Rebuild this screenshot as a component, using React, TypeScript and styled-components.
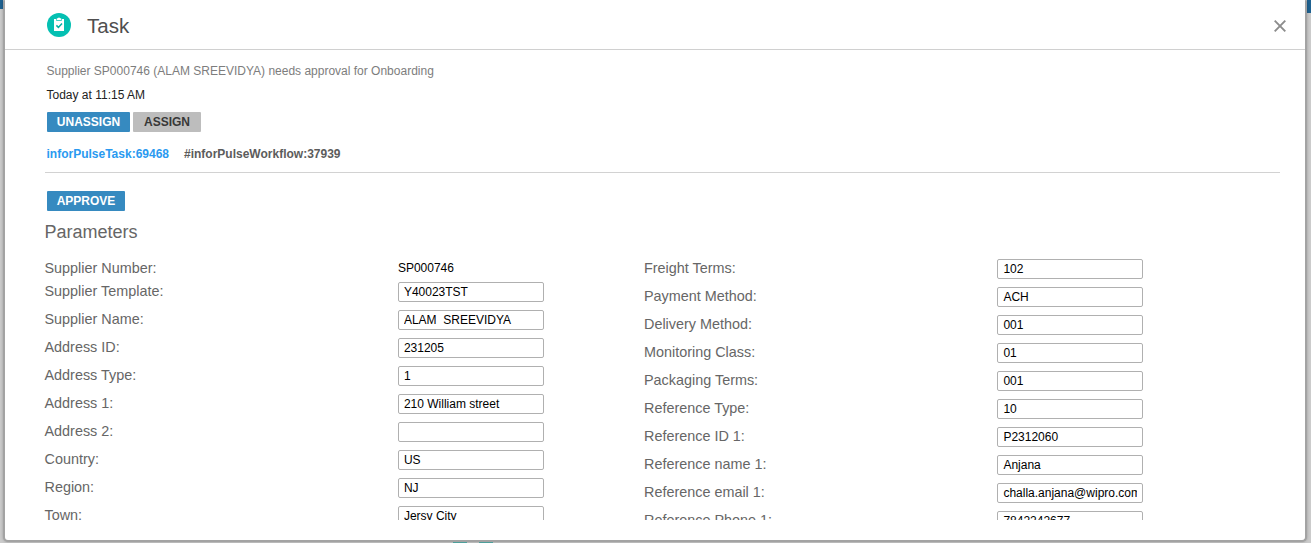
import React from 'react';
import styled, { createGlobalStyle } from 'styled-components';

const GlobalStyle = createGlobalStyle`
  * { box-sizing: border-box; }
  body {
    margin: 0;
    overflow: hidden;
    font-family: Arial, 'Liberation Sans', sans-serif;
    background: #cbcbcb;
  }
`;

const Page = styled.div`
  position: relative;
  display: flex;
  height: 543px;
  padding: 0 4px 1px 3px;
  overflow: hidden;
`;

const Banner = styled.div<{ $side: 'left' | 'right' }>`
  position: absolute;
  top: 0;
  ${(p) => p.$side}: 0;
  width: ${(p) => (p.$side === 'left' ? 3 : 4)}px;
  height: ${(p) => (p.$side === 'left' ? 9 : 13)}px;
  background: #1f6291;
`;

const Behind = styled.div`
  position: absolute;
  left: 453px;
  bottom: 0;
  display: flex;
  gap: 12px;
`;

const Dash = styled.span`
  width: 14px;
  height: 1px;
  background: #4d9f9b;
`;

const Dialog = styled.section`
  flex: 1;
  display: flex;
  flex-direction: column;
  border: 2px solid #a3a3a3;
  border-top: 0;
  border-radius: 2px 2px 5px 5px;
  background: #fff;
  box-shadow: 0 0 3px rgba(0, 0, 0, 0.25);
  position: relative;
`;

const Header = styled.header`
  display: flex;
  align-items: center;
  height: 50px;
  padding: 0 19px 0 42px;
  border-bottom: 1px solid #d0d0d0;
`;

const Title = styled.h1`
  flex: 1;
  margin: 2px 0 0 16px;
  font-size: 20.5px;
  line-height: 26px;
  font-weight: 400;
  color: #4f4f4f;
`;

const Close = styled.button`
  display: flex;
  margin-top: 3px;
  padding: 0;
  border: 0;
  background: none;
`;

const Body = styled.main`
  height: 470px;
  padding: 13px 25px 0 39.5px;
  overflow: hidden;
`;

const Details = styled.div`
  height: 109px;
  padding-left: 2px;
  font-size: 12px;
`;

const Message = styled.p`
  margin: 0;
  line-height: 16px;
  color: #7d7d7d;
`;

const Time = styled.p`
  margin: 8px 0 9px;
  line-height: 16px;
  color: #222;
`;

const Actions = styled.div`
  display: flex;
  gap: 3px;
  padding-left: 0.5px;
`;

const Button = styled.button<{ $width: number; $muted?: boolean }>`
  width: ${(p) => p.$width}px;
  height: 20px;
  padding: 0;
  border: 0;
  border-radius: 1px;
  background: ${(p) => (p.$muted ? '#bdbdbd' : '#368ac0')};
  color: ${(p) => (p.$muted ? '#383838' : '#fff')};
  font: bold 12px/20px Arial, 'Liberation Sans', sans-serif;
`;

const Tags = styled.div`
  display: flex;
  gap: 15px;
  margin-top: 14px;
  line-height: 16px;
  font-weight: 700;
`;

const Tag = styled.span<{ $link?: boolean }>`
  color: ${(p) => (p.$link ? '#2a9af0' : '#5c5c5c')};
`;

const Approval = styled.div`
  margin-left: 0.5px;
  padding: 18px 0 0 2px;
  border-top: 1px solid #d2d2d2;
`;

const Heading = styled.h2`
  margin: 10px 0 15px;
  font-size: 18px;
  line-height: 22px;
  font-weight: 400;
  color: #666;
`;

const Columns = styled.div`
  display: grid;
  grid-template-columns: 599.5px 600px;
`;

const Row = styled.div<{ $plain?: boolean }>`
  display: grid;
  grid-template-columns: 353.4px 146px;
  height: ${(p) => (p.$plain ? 23 : 28)}px;
`;

const Label = styled.label`
  font-size: 14.4px;
  line-height: 20px;
  color: #666;
`;

const Value = styled.span`
  font-size: 12px;
  line-height: 20px;
  color: #000;
`;

const Field = styled.div`
  height: 20px;
  margin-top: 1px;
  padding: 0 5px;
  border: 1px solid #b0b0b0;
  border-radius: 2px;
  font-size: 12px;
  line-height: 18px;
  color: #000;
`;

const FieldText = styled.div`
  overflow: hidden;
  white-space: pre;
`;

type Entry = { label: string; value: string; plain?: boolean };

const left: Entry[] = [
  { label: 'Supplier Number:', value: 'SP000746', plain: true },
  { label: 'Supplier Template:', value: 'Y40023TST' },
  { label: 'Supplier Name:', value: 'ALAM  SREEVIDYA' },
  { label: 'Address ID:', value: '231205' },
  { label: 'Address Type:', value: '1' },
  { label: 'Address 1:', value: '210 William street' },
  { label: 'Address 2:', value: '' },
  { label: 'Country:', value: 'US' },
  { label: 'Region:', value: 'NJ' },
  { label: 'Town:', value: 'Jersy City' },
];

const right: Entry[] = [
  { label: 'Freight Terms:', value: '102' },
  { label: 'Payment Method:', value: 'ACH' },
  { label: 'Delivery Method:', value: '001' },
  { label: 'Monitoring Class:', value: '01' },
  { label: 'Packaging Terms:', value: '001' },
  { label: 'Reference Type:', value: '10' },
  { label: 'Reference ID 1:', value: 'P2312060' },
  { label: 'Reference name 1:', value: 'Anjana' },
  { label: 'Reference email 1:', value: 'challa.anjana@wipro.com' },
  { label: 'Reference Phone 1:', value: '7842242677' },
];

const Parameters = ({ entries }: { entries: Entry[] }) => (
  <div>
    {entries.map((e) => (
      <Row key={e.label} $plain={e.plain}>
        <Label>{e.label}</Label>
        {e.plain ? (
          <Value>{e.value}</Value>
        ) : (
          <Field>
            <FieldText>{e.value}</FieldText>
          </Field>
        )}
      </Row>
    ))}
  </div>
);

const TaskIcon = () => (
  <svg width="24" height="24" viewBox="0 0 24 24">
    <circle cx="12" cy="12" r="12" fill="#04c0b2" />
    <path d="M7 6h2.2v1.7h5.600V6H17v12H7z" fill="#fff" />
    <path d="M9.800 6.900V5.300h1.100a1.150 1.150 0 0 1 2.200 0h1.100v1.600z" fill="#fff" />
    <path d="M9.400 12.400l2 2 3.600-4" fill="none" stroke="#04b0a3" strokeWidth="1.500" />
  </svg>
);

export default function App() {
  return (
    <>
      <GlobalStyle />
      <Page>
        <Banner $side="left" />
        <Banner $side="right" />
        <Dialog>
          <Header>
            <TaskIcon />
            <Title>Task</Title>
            <Close aria-label="Close">
              <svg width="12" height="12" viewBox="0 0 12 12">
                <path d="M0.700 0.700l10.600 10.600M11.300 0.700L0.700 11.300" stroke="#8c8c8c" strokeWidth="1.900" />
              </svg>
            </Close>
          </Header>
          <Body>
            <Details>
              <Message>Supplier SP000746 (ALAM SREEVIDYA) needs approval for Onboarding</Message>
              <Time>Today at 11:15 AM</Time>
              <Actions>
                <Button $width={83}>UNASSIGN</Button>
                <Button $width={68} $muted>ASSIGN</Button>
              </Actions>
              <Tags>
                <Tag $link>inforPulseTask:69468</Tag>
                <Tag>#inforPulseWorkflow:37939</Tag>
              </Tags>
            </Details>
            <Approval>
              <Button $width={78}>APPROVE</Button>
            </Approval>
            <Heading>Parameters</Heading>
            <Columns>
              <Parameters entries={left} />
              <Parameters entries={right} />
            </Columns>
          </Body>
        </Dialog>
        <Behind>
          <Dash />
          <Dash />
        </Behind>
      </Page>
    </>
  );
}
